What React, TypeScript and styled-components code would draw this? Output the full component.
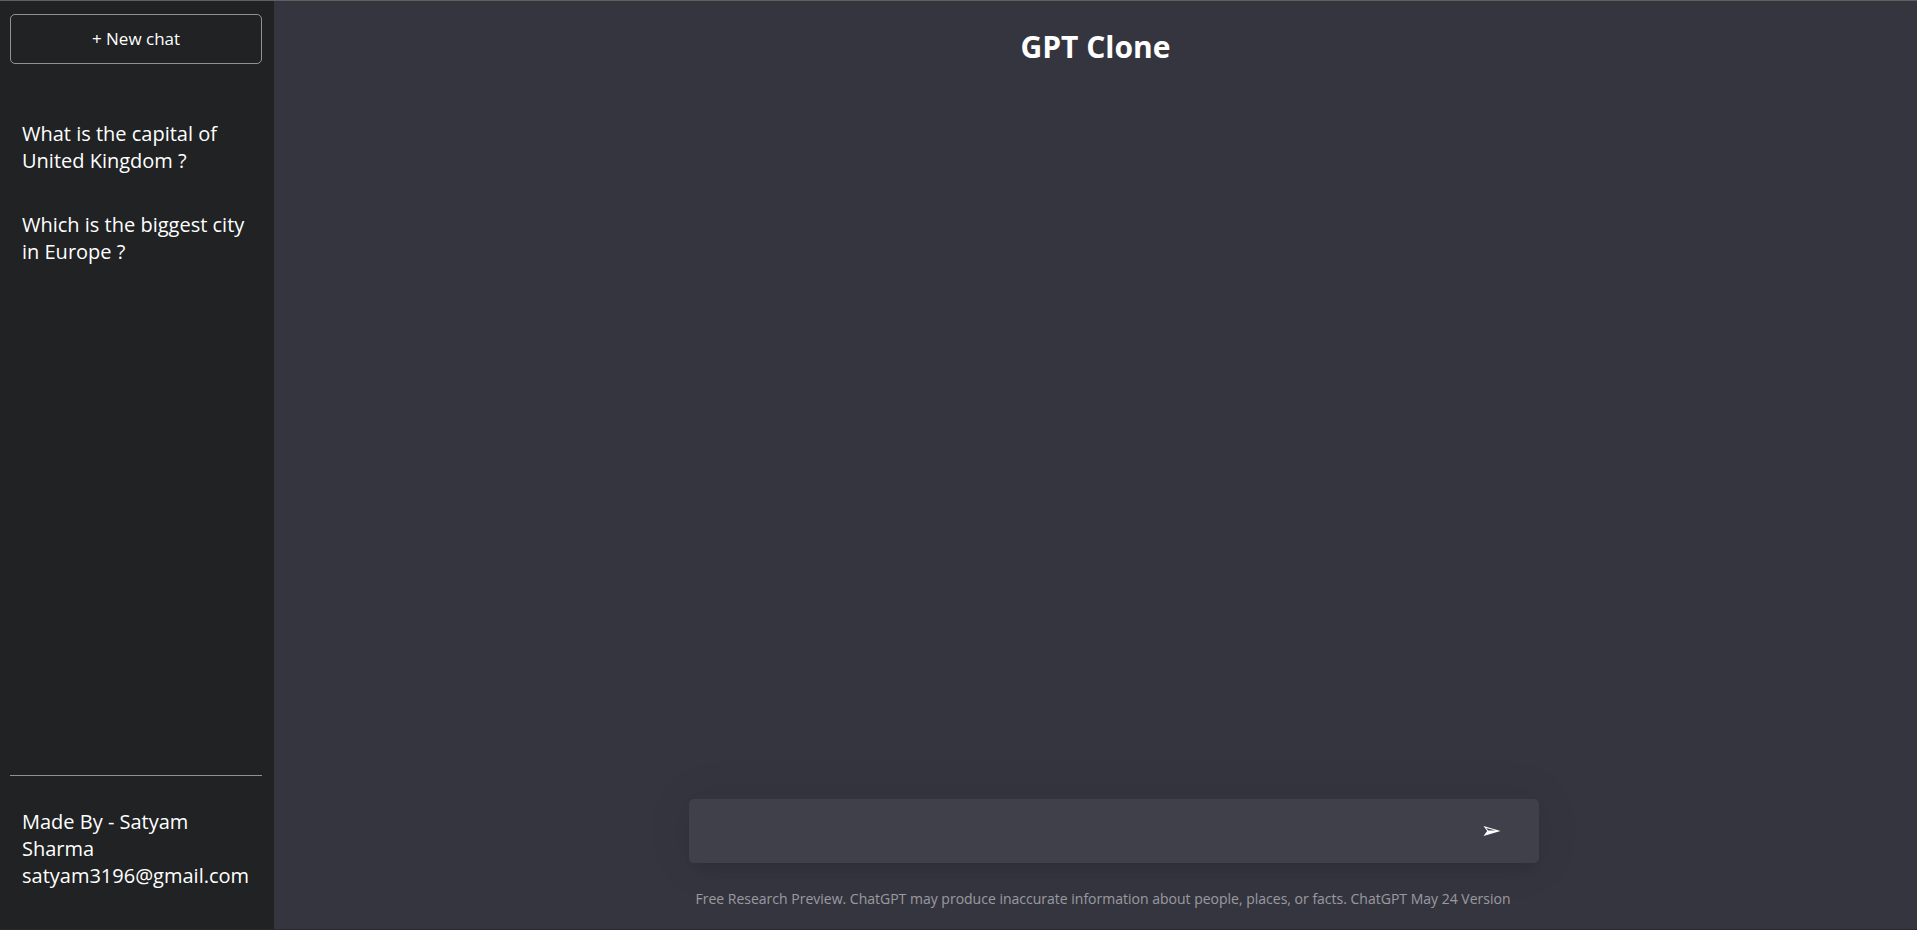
import React from 'react';
import styled, { createGlobalStyle } from 'styled-components';

const GlobalStyle = createGlobalStyle`
  * { box-sizing: border-box; margin: 0; padding: 0; }
  body { background: #353540; color: #fff; font-family: "Open Sans", sans-serif; }
`;

const Shell = styled.div`
  display: flex;
  height: 100vh;
  border-top: 1px solid #5e5f5f;
  border-bottom: 1px solid #29292f;
`;

const Sidebar = styled.aside`
  display: flex;
  flex-direction: column;
  justify-content: space-between;
  flex: none;
  width: 274px;
  padding: 0 12px 0 10px;
  background: #202223;
`;

const NewChat = styled.button`
  width: 100%;
  height: 50px;
  margin-top: 13px;
  border: 1px solid rgba(255, 255, 255, 0.5);
  border-radius: 5px;
  background: transparent;
  color: #fff;
  font: 400 17px/24px "Open Sans", sans-serif;
`;

const History = styled.ul`
  list-style: none;
  margin-top: 40px;
`;

const HistoryItem = styled.li`
  padding: 16px 12px;
  margin-bottom: 5px;
  font-size: 20px;
  line-height: 27px;
`;

const Credits = styled.footer`
  padding: 32px 12px 40px;
  border-top: 1px solid rgba(255, 255, 255, 0.5);
  font-size: 20px;
  line-height: 27px;
`;

const Main = styled.main`
  display: flex;
  flex: 1;
  flex-direction: column;
  align-items: center;
  justify-content: space-between;
`;

const Title = styled.h1`
  margin-top: 26px;
  font-size: 30px;
  line-height: 40px;
`;

const Composer = styled.section`
  width: 850px;
  max-width: 100%;
  margin-left: 36px;
`;

const Prompt = styled.form`
  display: flex;
  align-items: center;
  height: 64px;
  padding-right: 31px;
  border-radius: 5px;
  background: #40404b;
  box-shadow: 0 12px 12px -8px rgba(0, 0, 0, 0.12), 0 0 48px rgba(0, 0, 0, 0.08);
`;

const PromptInput = styled.input`
  flex: 1;
  height: 64px;
  padding: 12px 16px;
  border: none;
  outline: none;
  background: transparent;
  color: #fff;
  font: 400 20px/27px "Open Sans", sans-serif;
`;

const Send = styled.button`
  display: flex;
  align-items: center;
  justify-content: center;
  width: 32px;
  height: 32px;
  border: none;
  background: transparent;
  color: #fff;
`;

const Notice = styled.p`
  padding: 26px 7px 20px;
  color: rgba(255, 255, 255, 0.5);
  font-size: 14px;
  line-height: 20px;
`;

const SendIcon = () => (
  <svg width="18" height="10" viewBox="0 0 18 10" fill="currentColor" fillRule="evenodd" aria-hidden="true">
    <path d="M0.5 0L17.5 5L0.5 10L4.2 5ZM3.2 1.9L5.2 4.6L12.6 4.6Z" />
  </svg>
);

const chats = ['What is the capital of United Kingdom ?', 'Which is the biggest city in Europe ?'];

export default function App() {
  return (
    <>
      <GlobalStyle />
      <Shell>
        <Sidebar>
          <div>
            <NewChat type="button">+ New chat</NewChat>
            <History>
              {chats.map((chat) => (
                <HistoryItem key={chat}>{chat}</HistoryItem>
              ))}
            </History>
          </div>
          <Credits>
            <p>Made By - Satyam Sharma</p>
            <p>satyam3196@gmail.com</p>
          </Credits>
        </Sidebar>
        <Main>
          <Title>GPT Clone</Title>
          <Composer>
            <Prompt onSubmit={(event) => event.preventDefault()}>
              <PromptInput type="text" aria-label="Message" />
              <Send type="submit" aria-label="Send">
                <SendIcon />
              </Send>
            </Prompt>
            <Notice>
              Free Research Preview. ChatGPT may produce inaccurate information about people, places, or facts. ChatGPT May 24 Version
            </Notice>
          </Composer>
        </Main>
      </Shell>
    </>
  );
}
